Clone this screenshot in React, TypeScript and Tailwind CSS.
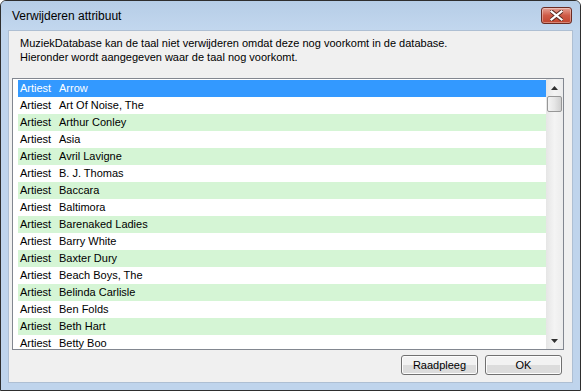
import React from "react";

const rows = [
  "Arrow",
  "Art Of Noise, The",
  "Arthur Conley",
  "Asia",
  "Avril Lavigne",
  "B. J. Thomas",
  "Baccara",
  "Baltimora",
  "Barenaked Ladies",
  "Barry White",
  "Baxter Dury",
  "Beach Boys, The",
  "Belinda Carlisle",
  "Ben Folds",
  "Beth Hart",
  "Betty Boo",
];

const CloseButton = () => (
  <div className="w-[31px] h-[17px] rounded-[3px] border border-[#6b2b22] bg-gradient-to-b from-[#e4a195] via-[#cf5b47] to-[#c0452f] flex items-center justify-center shadow-[inset_0_0_0_1px_rgba(255,255,255,0.35)]">
    <svg width="13" height="11" viewBox="0 0 13 11">
      <path
        d="M1 1 L12 10 M12 1 L1 10"
        stroke="#5a2a22"
        strokeWidth="4"
        strokeLinecap="square"
      />
      <path
        d="M1.5 1.5 L11.5 9.5 M11.5 1.5 L1.5 9.5"
        stroke="#ffffff"
        strokeWidth="2.2"
        strokeLinecap="square"
      />
    </svg>
  </div>
);

const Scrollbar = () => (
  <div className="w-[17px] h-full flex flex-col bg-gradient-to-r from-[#e6e6e6] via-[#f4f4f4] to-[#ececec]">
    <div className="h-[17px] flex items-center justify-center">
      <svg width="7" height="4" viewBox="0 0 7 4">
        <path d="M3.5 0 L7 4 L0 4 Z" fill="#303030" />
      </svg>
    </div>
    <div className="h-[16px] mx-[1px] rounded-[2px] border border-[#979797] bg-gradient-to-r from-[#f4f4f4] via-[#e6e6e6] to-[#cfcfcf]" />
    <div className="flex-1" />
    <div className="h-[17px] flex items-center justify-center">
      <svg width="7" height="4" viewBox="0 0 7 4">
        <path d="M0 0 L7 0 L3.5 4 Z" fill="#303030" />
      </svg>
    </div>
  </div>
);

const Button = ({ label }: { label: string }) => (
  <button
    type="button"
    className="w-[77px] h-[20px] rounded-[3px] border border-[#707070] bg-gradient-to-b from-[#f2f2f2] from-50% to-[#dcdcdc] to-50% text-[11px] leading-[18px] text-black shadow-[inset_0_0_0_1px_#fcfcfc]"
  >
    {label}
  </button>
);

export default function App() {
  return (
    <div
      className="w-[581px] h-[391px] border border-[#2e2e2e] rounded-t-[6px] bg-[#bfd4ec] flex flex-col overflow-hidden"
      style={{ fontFamily: '"Liberation Sans", Arial, sans-serif' }}
    >
      <div className="h-[29px] flex items-center justify-between pl-[11px] pr-[8px] bg-gradient-to-b from-[#b6cde7] to-[#c2d7ee]">
        <span className="text-[12px] text-black pt-[1px]">Verwijderen attribuut</span>
        <CloseButton />
      </div>
      <div className="flex-1 px-[7px] pb-[7px] flex">
        <div className="flex-1 bg-[#f0f0f0] border border-[#aebfd3] flex flex-col">
          <div className="pl-[11px] pt-[5px] text-[11px] leading-[14px] text-black">
            <div>MuziekDatabase kan de taal niet verwijderen omdat deze nog voorkomt in de database.</div>
            <div>Hieronder wordt aangegeven waar de taal nog voorkomt.</div>
          </div>
          <div className="ml-[3px] mt-[14px] w-[552px] h-[272px] border border-[#828790] bg-white flex">
            <div className="flex-1 pl-[5px] pt-[1px] overflow-hidden">
              {rows.map((name, i) => (
                <div
                  key={name}
                  className={
                    "h-[17px] flex items-center pl-[2px] text-[11px] " +
                    (i === 0
                      ? "bg-[#3399ff] text-white"
                      : i % 2 === 0
                      ? "bg-[#d5f5d5] text-black"
                      : "bg-white text-black")
                  }
                >
                  <span className="w-[39px]">Artiest</span>
                  <span>{name}</span>
                </div>
              ))}
            </div>
            <Scrollbar />
          </div>
          <div className="mt-[5px] flex justify-end gap-[7px] pr-[10px]">
            <Button label="Raadpleeg" />
            <Button label="OK" />
          </div>
        </div>
      </div>
    </div>
  );
}
